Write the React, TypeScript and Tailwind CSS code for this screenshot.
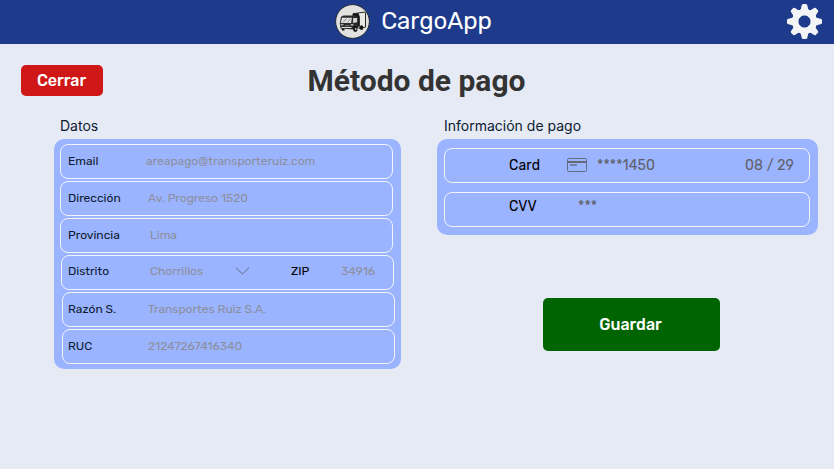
import type { ReactNode } from "react";

function TruckLogo() {
  return (
    <svg viewBox="0 0 36 36" className="h-9 w-9 shrink-0">
      <g transform="translate(-0.5 0.5)">
        <circle cx="18" cy="18" r="16.9" fill="#e1e1df" stroke="#1b2333" strokeWidth="1" />
        <path d="M18.5 10.2 L30.5 8.6 L31 9.2 V23.5 L24.5 25 V13.4 Z" fill="#e8e8e6" stroke="#111" strokeWidth="0.9" />
        <path d="M18 10.3 L24 9.8 L25.2 13 V23 H23.5 V13.5 H18 Z" fill="#161616" />
        <path d="M6.5 13.3 L9 12 H21 L23.5 13.6 V24.5 L19 26 L6 25 L5.3 20 Z" fill="#2a2a2a" />
        <path d="M7.4 14.2 H17.4 L16.6 19.6 H6.4 Z" fill="#dededc" />
        <path d="M8.5 19 L12 15 M13 19 L16 15.5" stroke="#555" strokeWidth="0.6" />
        <path d="M18.8 14.4 H22.6 V18.8 L18.4 19.4 Z" fill="#d5d5d3" />
        <path d="M6.2 21.2 H9 M16.3 21.4 H18.8 M7 24 H17" stroke="#ddd" strokeWidth="1.1" />
        <path d="M10.5 22.2 H15" stroke="#888" strokeWidth="0.8" />
        <ellipse cx="20.8" cy="25.4" rx="2.2" ry="2.8" fill="#111" />
        <ellipse cx="21.2" cy="25.4" rx="0.8" ry="1.2" fill="#bbb" />
        <ellipse cx="27" cy="24.2" rx="1.7" ry="2.4" fill="#111" />
        <path d="M7 25 H10 V27 H7.6 Z" fill="#111" />
      </g>
    </svg>
  );
}

const teeth = [0, 45, 90, 135, 180, 225, 270, 315];

function Gear() {
  return (
    <svg viewBox="0 0 36 36" className="h-9 w-9 shrink-0" fill="#f3f4f6">
      <g transform="translate(-0.5 -0.5)">
        {teeth.map((a) => (
          <path key={a} transform={`rotate(${a} 18 18)`} d="M12.8 7.5 Q14.7 6.3 14.9 3 Q15.2 0.5 16.4 0.5 H19.6 Q20.8 0.5 21.1 3 Q21.3 6.3 23.2 7.5 L21 12 H15 Z" />
        ))}
        <path fillRule="evenodd" d="M18 5.6 A12.4 12.4 0 1 0 18 30.4 A12.4 12.4 0 1 0 18 5.6 Z M18 11.5 A6.5 6.5 0 1 1 18 24.5 A6.5 6.5 0 1 1 18 11.5 Z" />
      </g>
    </svg>
  );
}

function Row({ className, children }: { className: string; children: ReactNode }) {
  return (
    <div className={`flex h-[35px] items-center whitespace-nowrap rounded-lg border border-[#f1f4fb] ${className}`}>
      {children}
    </div>
  );
}

export default function App() {
  return (
    <div className="flex h-[469px] w-[834px] flex-col overflow-hidden bg-[#e5eaf5] font-['Rubik','Roboto',sans-serif]">
      <header className="grid h-11 shrink-0 grid-cols-[1fr_auto_1fr] items-center bg-[#1e3a8a]">
        <div />
        <div className="flex items-center gap-[10px] pb-[2px] pr-[7px] text-[24px] leading-none text-white">
          <TruckLogo />
          <span>CargoApp</span>
        </div>
        <div className="flex justify-end pr-[11px]">
          <Gear />
        </div>
      </header>

      <div className="grid h-[73px] shrink-0 grid-cols-[1fr_auto_1fr] items-center pl-[21px] pr-[22px]">
        <button className="h-[31px] w-[82px] rounded-[5px] bg-[#cf1717] pr-px text-[16px] font-medium leading-none text-white">
          Cerrar
        </button>
        <h1 className="font-['Roboto',sans-serif] text-[30px] font-bold leading-none text-[#333333]">Método de pago</h1>
        <div />
      </div>

      <main className="flex items-start pl-[54px]">
        <section className="w-[347px]">
          <h2 className="flex h-[22px] items-center pb-[4px] pl-[6px] font-['Inter',sans-serif] text-[14px] leading-none text-[#0c1a30]">
            Datos
          </h2>
          <div className="flex h-[230px] flex-col gap-[2px] rounded-[10px] bg-[#9bb4ff] pl-[6px] pt-[5px] text-[12px] leading-none text-[#8b8f9c]">
            <Row className="w-[333px] pb-[2px] pl-[7px]">
              <span className="w-[78px] text-[#0c1a30]">Email</span>
              <span>areapago@transporteruiz.com</span>
            </Row>
            <Row className="w-[333px] pb-[2px] pl-[7px]">
              <span className="w-[80px] text-[#0c1a30]">Dirección</span>
              <span>Av. Progreso 1520</span>
            </Row>
            <Row className="w-[333px] pb-[2px] pl-[7px]">
              <span className="w-[82px] text-[#0c1a30]">Provincia</span>
              <span>Lima</span>
            </Row>
            <Row className="ml-px w-[333px] pb-[4px] pl-[6px]">
              <span className="w-[82px] text-[#0c1a30]">Distrito</span>
              <span className="w-[85px]">Chorrillos</span>
              <svg viewBox="0 0 15 8" className="mt-px h-2 w-[15px]" fill="none" stroke="#626b88" strokeWidth="1">
                <path d="M1 0.8 L7.5 7 L14 0.8" />
              </svg>
              <span className="ml-[41px] w-[50px] text-black">ZIP</span>
              <span>34916</span>
            </Row>
            <Row className="ml-[2px] w-[333px] pb-[2px] pl-[5px]">
              <span className="w-[80px] text-[#0c1a30]">Razón S.</span>
              <span>Transportes Ruiz S.A.</span>
            </Row>
            <Row className="ml-[2px] w-[333px] pb-[2px] pl-[5px]">
              <span className="w-[80px] text-[#0c1a30]">RUC</span>
              <span>21247267416340</span>
            </Row>
          </div>
        </section>

        <section className="ml-9 w-[381px]">
          <h2 className="flex h-[22px] items-center pb-[4px] pl-[7px] font-['Inter',sans-serif] text-[14px] leading-none text-[#0c1a30]">
            Información de pago
          </h2>
          <div className="flex h-24 flex-col gap-[9px] rounded-[10px] bg-[#9bb4ff] pl-[7px] pt-[9px] text-[14px] leading-none text-[#5e6067]">
            <Row className="w-[366px] pl-[64px]">
              <span className="w-[57px] tracking-[0.15px] text-black">Card</span>
              <svg viewBox="0 0 22 16" className="mb-px h-4 w-[22px]" fill="none">
                <rect x="1.5" y="1.5" width="19" height="13" rx="1.2" stroke="#666d83" />
                <path d="M1.5 5 H20.5" stroke="#666a77" strokeWidth="2" />
                <path d="M4 8 H11" stroke="#7681a8" strokeWidth="2" />
              </svg>
              <span className="ml-[9px] w-[148px] tracking-[0.15px]">****1450</span>
              <span className="tracking-[0.15px]">08 / 29</span>
            </Row>
            <Row className="w-[366px] pb-[6px] pl-[64px]">
              <span className="w-[69px] tracking-[0.15px] text-black">CVV</span>
              <span className="tracking-[0.15px]">***</span>
            </Row>
          </div>
          <button className="ml-[106px] mt-[63px] h-[53px] w-[177px] rounded-[5px] bg-[#006400] pr-[2px] text-[16px] font-medium leading-none text-white">
            Guardar
          </button>
        </section>
      </main>
    </div>
  );
}
